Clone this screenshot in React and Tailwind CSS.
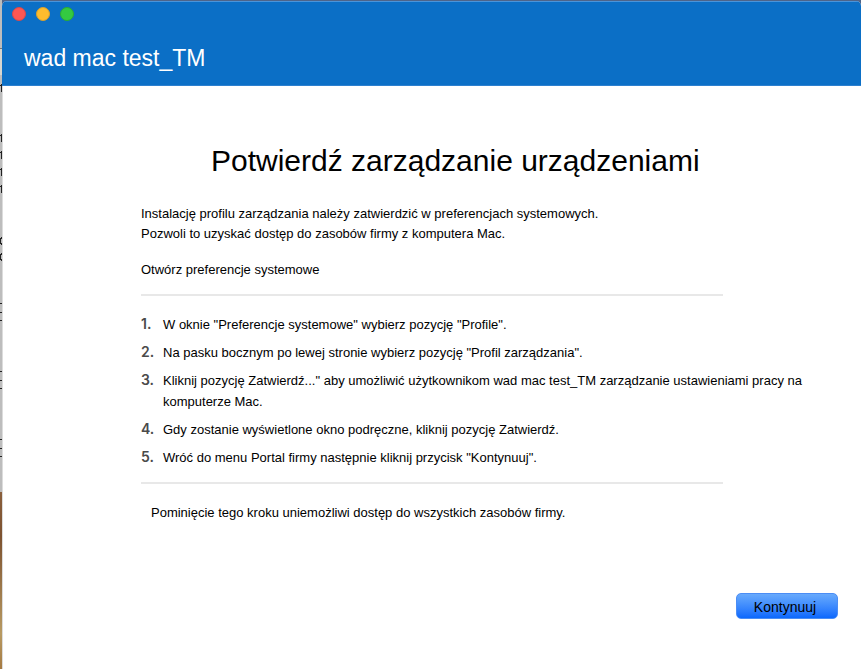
const steps = [
  'W oknie "Preferencje systemowe" wybierz pozycję "Profile".',
  'Na pasku bocznym po lewej stronie wybierz pozycję "Profil zarządzania".',
  'Kliknij pozycję Zatwierdź..." aby umożliwić użytkownikom wad mac test_TM zarządzanie ustawieniami pracy na komputerze Mac.',
  'Gdy zostanie wyświetlone okno podręczne, kliknij pozycję Zatwierdź.',
  'Wróć do menu Portal firmy następnie kliknij przycisk "Kontynuuj".',
];

const lights = [
  { label: "Zamknij", style: "bg-[#fc5753] border-[#d9484c]" },
  { label: "Minimalizuj", style: "bg-[#fdbc2e] border-[#d9a02c]" },
  { label: "Maksymalizuj", style: "bg-[#34c941] border-[#2aac33]" },
];

const stemMarks = [88, 138, 155, 172, 189];
const bowlMarks = [240, 256];
const lineMarks = [303, 312, 320, 371, 380, 388, 439, 448, 456];

// Sliver of the desktop that shows behind the window.
function DesktopEdge() {
  return (
    <svg className="h-[669px] w-[2px]" viewBox="0 0 2 669" aria-hidden="true">
      <defs>
        <linearGradient id="dune" x1="0" y1="0" x2="0" y2="1">
          <stop offset="0" stopColor="#8a5f3c" />
          <stop offset="0.25" stopColor="#7d5230" />
          <stop offset="0.8" stopColor="#b89a62" />
          <stop offset="1" stopColor="#a57a42" />
        </linearGradient>
      </defs>
      <rect width="2" height="492" fill="#bdbdbd" />
      <rect y="49" width="2" height="26" fill="#d6d6d0" />
      <rect y="48" width="2" height="1" fill="#777" />
      <rect y="492" width="2" height="177" fill="url(#dune)" />
      {stemMarks.map((y) => (
        <g key={y} fill="#222">
          <rect y={y - 3} width="2" height="1" />
          <rect x="1" y={y - 4} width="1" height="8" />
        </g>
      ))}
      {bowlMarks.map((y) => (
        <g key={y} fill="#222">
          <rect y={y - 2} width="1" height="6" />
          <rect x="1" y={y - 3} width="1" height="2" />
          <rect x="1" y={y + 3} width="1" height="2" />
        </g>
      ))}
      {lineMarks.map((y) => (
        <rect key={y} y={y} width="2" height="1" fill="#222" />
      ))}
    </svg>
  );
}

export default function App() {
  return (
    <div className="flex min-h-screen bg-[#4f6488] font-['Liberation_Sans',Arial,sans-serif] text-black">
      <div className="w-[2px] shrink-0 bg-[#bdbdbd]">
        <DesktopEdge />
      </div>
      <div className="flex min-w-0 grow flex-col pt-px">
        <main className="flex grow flex-col overflow-hidden rounded-t-[5px] bg-white">
          <header className="border-t border-b border-t-[#4a94da] border-b-[#2d80cf] bg-[#0b6fc6]">
            <div className="flex gap-[10px] px-[10px] pt-[5px]">
              {lights.map((light) => (
                <button
                  key={light.label}
                  type="button"
                  aria-label={light.label}
                  className={`size-[14px] rounded-full border ${light.style}`}
                />
              ))}
            </div>
            <div className="px-[22px] pt-[21px] pb-[11px] text-[23px] leading-[32px] text-white">
              wad mac test_TM
            </div>
          </header>

          <div className="flex grow flex-col border-l border-[#dcdcdc]">
            <section className="pt-[57px] pr-[42px] pl-[138px]">
              <h1 className="pl-[70px] text-[30px] leading-[36px]">
                Potwierdź zarządzanie urządzeniami
              </h1>
              <p className="mt-[25px] text-[13px] leading-[20px]">
                Instalację profilu zarządzania należy zatwierdzić w preferencjach systemowych.
                <br />
                Pozwoli to uzyskać dostęp do zasobów firmy z komputera Mac.
              </p>
              <p className="mt-[16px] text-[13px] leading-[20px]">Otwórz preferencje systemowe</p>
              <hr className="mt-[14px] max-w-[582px] border-t-2 border-[#e8e8e8]" />
              <ol className="mt-[18px] flex flex-col gap-[7px] text-[13px] leading-[21px]">
                {steps.map((step, i) => (
                  <li key={step} className="flex">
                    <span className="w-[22px] shrink-0 font-['Inter',sans-serif] text-[14px] leading-[20px] font-semibold text-[#4a4a4a]">
                      {i + 1}.
                    </span>
                    <span>{step}</span>
                  </li>
                ))}
              </ol>
              <hr className="mt-[14px] max-w-[582px] border-t-2 border-[#e8e8e8]" />
              <p className="mt-[19px] pl-[10px] text-[13px] leading-[20px]">
                Pominięcie tego kroku uniemożliwi dostęp do wszystkich zasobów firmy.
              </p>
            </section>

            <footer className="mt-auto flex justify-end pr-[23px] pb-[50px]">
              <button
                type="button"
                className="h-[26px] w-[102px] rounded-[5px] border border-[#4b8df5] bg-linear-to-b from-[#68aafc] to-[#0a68fd] pt-[2px] pr-[4px] text-[14px] leading-[22px]"
              >
                Kontynuuj
              </button>
            </footer>
          </div>
        </main>
      </div>
    </div>
  );
}
